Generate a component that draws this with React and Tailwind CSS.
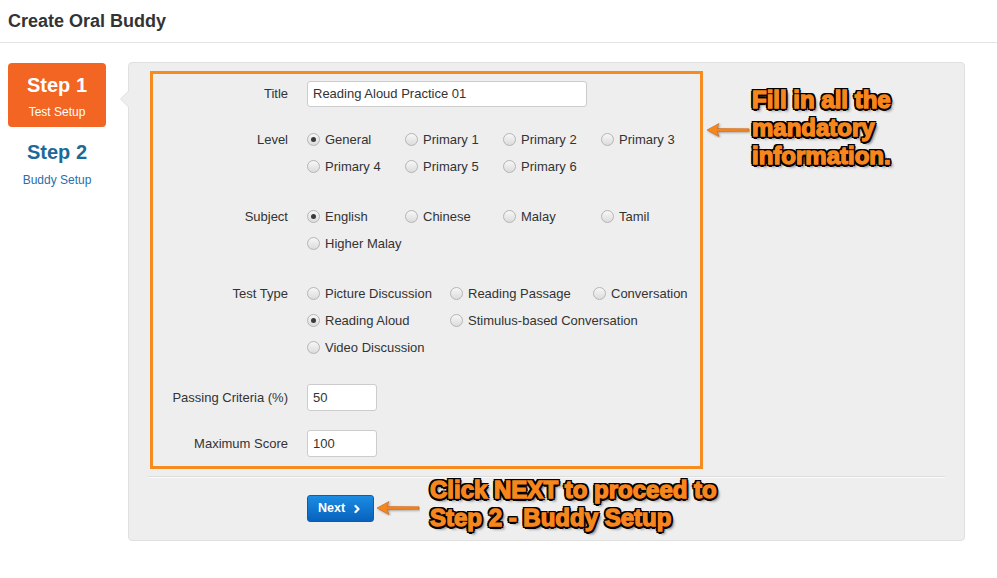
import React from "react";
import { ChevronRight } from "lucide-react";

// Create Oral Buddy — step 1 form with orange call-out annotations.

const LEVELS = ["General", "Primary 1", "Primary 2", "Primary 3", "Primary 4", "Primary 5", "Primary 6"];
const SUBJECTS = ["English", "Chinese", "Malay", "Tamil", "Higher Malay"];
const TEST_TYPES = [
  "Picture Discussion",
  "Reading Passage",
  "Conversation",
  "Reading Aloud",
  "Stimulus-based Conversation",
  null,
  "Video Discussion",
];

const Radio = ({ label, checked }) => (
  <label className="flex items-center gap-[5px] h-[27px] whitespace-nowrap">
    <span className="shrink-0 w-[13px] h-[13px] rounded-full border border-[#b5b5b5] bg-gradient-to-b from-[#f7f7f7] to-[#dcdcdc] flex items-center justify-center">
      {checked && <span className="w-[5px] h-[5px] rounded-full bg-[#3a3a3a]" />}
    </span>
    <span>{label}</span>
  </label>
);

const Label = ({ children, tall }) => (
  <div className={`w-[135px] text-right shrink-0 ${tall ? "leading-[27px]" : "leading-[26px]"}`}>{children}</div>
);

const Arrow = ({ className }) => (
  <svg className={className} width="44" height="16" viewBox="0 0 44 16">
    <path
      d="M1 8 L13 1.5 L11 6.6 L43 6.8 L43 9.2 L11 9.4 L13 14.5 Z"
      fill="#f7861d"
      stroke="#c9661a"
      strokeWidth="0.6"
      style={{ filter: "drop-shadow(1px 1px 1px rgba(0,0,0,0.35))" }}
    />
  </svg>
);

const calloutText =
  "font-bold text-[24px] leading-[28px] text-[#f7861d] [-webkit-text-stroke:1.4px_#f7861d] [text-shadow:-2px_-2px_0_#000,2px_-2px_0_#000,-2px_2px_0_#000,2px_2px_0_#000,0_2.5px_0_#000,0_-2.5px_0_#000,2.5px_0_0_#000,-2.5px_0_0_#000,3px_3px_3px_rgba(0,0,0,0.6)]";

export default function App() {
  return (
    <div className="min-h-screen bg-white text-[13px] text-[#333] font-['Liberation_Sans',Arial,sans-serif]">
      <div className="h-[43px] border-b border-[#e5e5e5] px-2 flex items-center">
        <h1 className="text-[18px] font-bold text-[#333] leading-none -mt-[1px]">Create Oral Buddy</h1>
      </div>

      <div className="flex items-start">
        {/* steps */}
        <div className="ml-2 w-[98px] mt-[20px] shrink-0">
          <div className="h-[64px] rounded-[4px] bg-[#f26522] text-white text-center">
            <div className="pt-[11px] text-[20px] font-bold leading-[22px]">Step 1</div>
            <div className="mt-[9px] text-[12px] leading-[14px]">Test Setup</div>
          </div>
          <div className="text-center mt-[14px]">
            <div className="text-[20px] font-bold leading-[22px] text-[#1b6a9a]">Step 2</div>
            <div className="mt-[10px] text-[12px] leading-[14px] text-[#2a6fa8]">Buddy Setup</div>
          </div>
        </div>

        {/* panel */}
        <div className="relative ml-[22px] mt-[19px] w-[837px] border border-[#e0e0e0] rounded-[4px] bg-[#eeeeee]">
          <span className="absolute -left-[9px] top-[28px] w-0 h-0 border-y-[8px] border-y-transparent border-r-[8px] border-r-[#e0e0e0]" />
          <span className="absolute -left-[8px] top-[28px] w-0 h-0 border-y-[8px] border-y-transparent border-r-[8px] border-r-[#eeeeee]" />

          <div className="pt-[8px] px-[21px]">
            <div className="w-[553px] border-[3px] border-[#f68b1f] pt-[7px] pb-[9px]">
              <div className="flex gap-[19px] items-center">
                <Label>Title</Label>
                <div className="w-[280px] h-[26px] bg-white border border-[#cccccc] rounded-[3px] pl-[5px] leading-[24px]">
                  Reading Aloud Practice 01
                </div>
              </div>

              <div className="flex gap-[19px] mt-[19px]">
                <Label tall>Level</Label>
                <div className="grid grid-cols-[98px_98px_98px_98px]">
                  {LEVELS.map((l) => (
                    <Radio key={l} label={l} checked={l === "General"} />
                  ))}
                </div>
              </div>

              <div className="flex gap-[19px] mt-[23px]">
                <Label tall>Subject</Label>
                <div className="grid grid-cols-[98px_98px_98px_98px]">
                  {SUBJECTS.map((s) => (
                    <Radio key={s} label={s} checked={s === "English"} />
                  ))}
                </div>
              </div>

              <div className="flex gap-[19px] mt-[23px]">
                <Label tall>Test Type</Label>
                <div className="grid grid-cols-[143px_143px_100px]">
                  {TEST_TYPES.map((t, i) =>
                    t ? <Radio key={t} label={t} checked={t === "Reading Aloud"} /> : <div key={i} />
                  )}
                </div>
              </div>

              <div className="flex gap-[19px] items-center mt-[23px]">
                <Label tall>Passing Criteria (%)</Label>
                <div className="w-[70px] h-[27px] bg-white border border-[#cccccc] rounded-[3px] pl-[5px] leading-[25px]">50</div>
              </div>

              <div className="flex gap-[19px] items-center mt-[19px]">
                <Label tall>Maximum Score</Label>
                <div className="w-[70px] h-[27px] bg-white border border-[#cccccc] rounded-[3px] pl-[5px] leading-[25px]">100</div>
              </div>
            </div>
          </div>

          <div className="mt-[7px] mx-[19px] border-t border-[#dddddd] shadow-[0_1px_0_#fafafa]" />

          <div className="pt-[18px] pb-[18px] pl-[178px]">
            <button className="h-[27px] w-[67px] rounded-[3px] border border-[#0a5eb0] bg-gradient-to-b from-[#1c8ce3] to-[#0862bd] text-white font-bold text-[12.5px] flex items-center justify-center gap-[6px]">
              Next
              <ChevronRight size={12} strokeWidth={4.5} />
            </button>
          </div>

          {/* annotations */}
          <Arrow className="absolute left-[577px] top-[59px]" />
          <div className={`absolute left-[623px] top-[23px] ${calloutText}`}>
            <div>Fill in all the</div>
            <div>mandatory</div>
            <div>information.</div>
          </div>

          <Arrow className="absolute left-[247px] top-[437px]" />
          <div className={`absolute left-[301px] top-[413px] whitespace-nowrap ${calloutText}`}>
            <div>Click NEXT to proceed to</div>
            <div>Step 2 - Buddy Setup</div>
          </div>
        </div>
      </div>
    </div>
  );
}
